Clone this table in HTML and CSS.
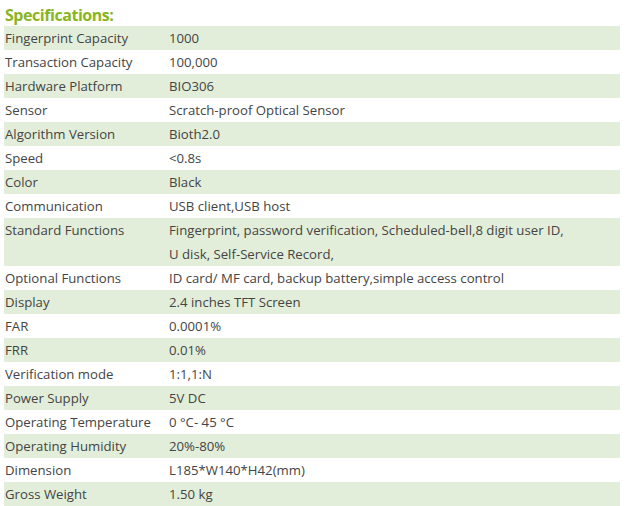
FILE: index.html
```html
<!DOCTYPE html>
<html>
<head>
<meta charset="utf-8">
<link rel="stylesheet" href="styles.css">
</head>
<body>
<div class="spec">
  <h2 class="title">Specifications:</h2>
  <table class="table">
    <tr class="alt"><td class="k">Fingerprint Capacity</td><td>1000</td></tr>
    <tr><td class="k">Transaction Capacity</td><td>100,000</td></tr>
    <tr class="alt"><td class="k">Hardware Platform</td><td>BIO306</td></tr>
    <tr><td class="k">Sensor</td><td>Scratch-proof Optical Sensor</td></tr>
    <tr class="alt"><td class="k">Algorithm Version</td><td>Bioth2.0</td></tr>
    <tr><td class="k">Speed</td><td>&lt;0.8s</td></tr>
    <tr class="alt"><td class="k">Color</td><td>Black</td></tr>
    <tr><td class="k">Communication</td><td>USB client,USB host</td></tr>
    <tr class="alt"><td class="k">Standard Functions</td><td>Fingerprint, password verification, Scheduled-bell,8 digit user ID,<br>U disk, Self-Service Record,</td></tr>
    <tr><td class="k">Optional Functions</td><td>ID card/ MF card, backup battery,simple access control</td></tr>
    <tr class="alt"><td class="k">Display</td><td>2.4 inches TFT Screen</td></tr>
    <tr><td class="k">FAR</td><td>0.0001%</td></tr>
    <tr class="alt"><td class="k">FRR</td><td>0.01%</td></tr>
    <tr><td class="k">Verification mode</td><td>1:1,1:N</td></tr>
    <tr class="alt"><td class="k">Power Supply</td><td>5V DC</td></tr>
    <tr><td class="k">Operating Temperature</td><td>0 °C- 45 °C</td></tr>
    <tr class="alt"><td class="k">Operating Humidity</td><td>20%-80%</td></tr>
    <tr><td class="k">Dimension</td><td>L185*W140*H42(mm)</td></tr>
    <tr class="alt"><td class="k">Gross Weight</td><td>1.50 kg</td></tr>
  </table>
</div>
</body>
</html>
```
FILE: styles.css
```css
html, body {
  margin: 0;
  padding: 0;
  background: #fff;
}
.spec {
  padding: 4px 10px 0 4px;
  font-family: "Open Sans", "Noto Sans", sans-serif;
  color: #444;
}
.title {
  margin: 0;
  height: 22px;
  font-size: 16px;
  letter-spacing: -0.45px;
  font-weight: bold;
  line-height: 22px;
  color: #8ab51f;
  padding-left: 1px;
}
.table {
  width: 616px;
  border-collapse: collapse;
  table-layout: fixed;
  font-size: 13.2px;
}
.table td {
  padding: 0 0 0 1px;
  line-height: 24px;
  vertical-align: top;
  white-space: nowrap;
}
.table td.k {
  width: 163px;
}
.alt {
  background: #e2eed9;
}
```
